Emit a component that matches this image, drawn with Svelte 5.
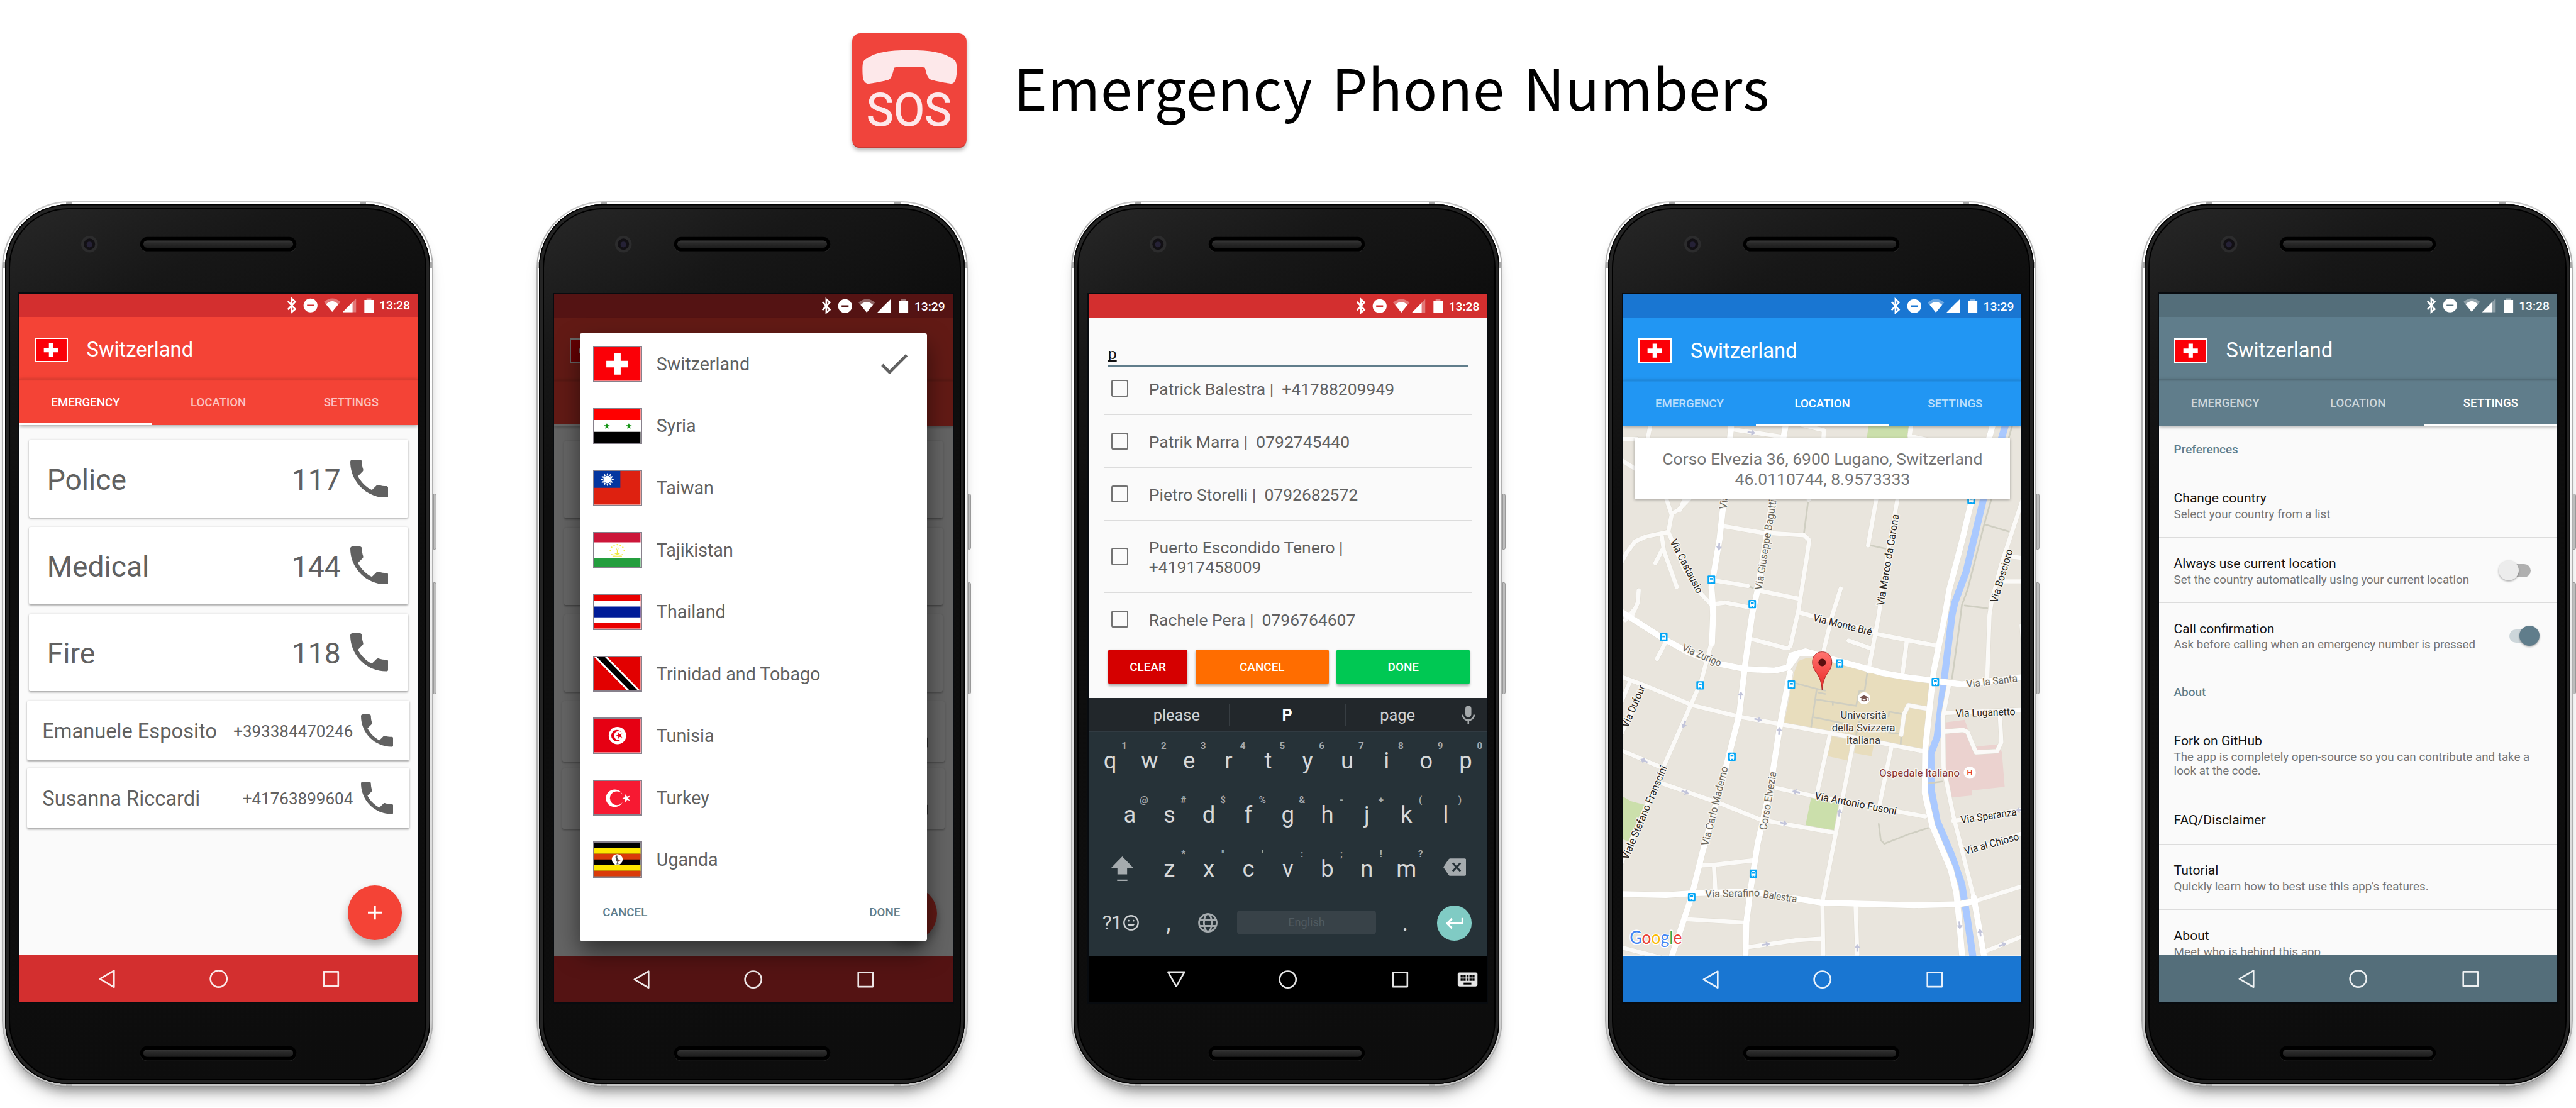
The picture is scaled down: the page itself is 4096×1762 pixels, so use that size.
<script>
  const DARK = '#4a4a48';

  const contacts = [
    { name: 'Police', number: '117', big: true },
    { name: 'Medical', number: '144', big: true },
    { name: 'Fire', number: '118', big: true },
    { name: 'Emanuele Esposito', number: '+393384470246', big: false },
    { name: 'Susanna Riccardi', number: '+41763899604', big: false }
  ];

  const countries = ['Switzerland', 'Syria', 'Taiwan', 'Tajikistan', 'Thailand', 'Trinidad and Tobago', 'Tunisia', 'Turkey', 'Uganda'];

  const people = [
    'Patrick Balestra |\u00a0 +41788209949',
    'Patrik Marra |\u00a0 0792745440',
    'Pietro Storelli |\u00a0 0792682572',
    'Puerto Escondido Tenero |\n+41917458009',
    'Rachele Pera |\u00a0 0796764607'
  ];

  const keyRows = [
    ['q1', 'w2', 'e3', 'r4', 't5', 'y6', 'u7', 'i8', 'o9', 'p0'],
    ['a@', 's#', 'd$', 'f%', 'g&', 'h-', 'j+', 'k(', 'l)'],
    ['z*', 'x"', "c'", 'v:', 'b;', 'n!', 'm?']
  ];

  const settings = [
    { header: 'Preferences' },
    { title: 'Change country', sub: 'Select your country from a list', line: true },
    { title: 'Always use current location', sub: 'Set the country automatically using your current location', line: true, toggle: 'off' },
    { title: 'Call confirmation', sub: 'Ask before calling when an emergency number is pressed', toggle: 'on' },
    { header: 'About' },
    { title: 'Fork on GitHub', sub: 'The app is completely open-source so you can contribute and take a\nlook at the code.', line: true },
    { title: 'FAQ/Disclaimer', line: true },
    { title: 'Tutorial', sub: "Quickly learn how to best use this app's features.", line: true },
    { title: 'About', sub: 'Meet who is behind this app.' }
  ];

  function star(cx, cy, r, rot = -90, n = 5, inner = 0.4) {
    const pts = [];
    for (let i = 0; i < n * 2; i++) {
      const a = ((rot + (i * 180) / n) * Math.PI) / 180;
      const k = i % 2 ? r * inner : r;
      pts.push((cx + k * Math.cos(a)).toFixed(2) + ',' + (cy + k * Math.sin(a)).toFixed(2));
    }
    return pts.join(' ');
  }

  // Map grid units to dp inside the map view
  const mx = (x) => (x - 68) / 3.4366;
  const my = (y) => y / 3.8118 + 195.7;
  const line = (p) => {
    let d = '';
    for (let i = 0; i < p.length; i += 2) d += (i ? 'L' : 'M') + mx(p[i]).toFixed(1) + ' ' + my(p[i + 1]).toFixed(1);
    return d;
  };

  const areas = [
    { c: '#e8ddbd', p: [675, 225, 690, 180, 720, 168, 770, 165, 990, 240, 1165, 268, 1130, 525, 638, 432] },
    { c: '#e8ddbd', p: [803, 475, 890, 495, 866, 572, 793, 555] },
    { c: '#e8ddbd', p: [893, 498, 957, 512, 950, 555, 888, 543] },
    { c: '#ebd2cf', p: [1212, 422, 1280, 412, 1292, 450, 1315, 518, 1400, 508, 1412, 540, 1422, 676, 1306, 690, 1306, 710, 1235, 718, 1210, 650] },
    { c: '#cbdfab', p: [735, 718, 833, 742, 815, 850, 715, 826] },
    { c: '#cbdfab', p: [60, 710, 95, 732, 145, 747, 90, 892, 60, 880] },
    { c: '#cbdfab', p: [940, -750, 1082, -750, 1075, -680, 930, -680] }
  ];
  const paths = [
    [725, -455, 710, -325], [945, -275, 1000, -262],
    [1450, -750, 1350, -360, 1290, -100, 1270, -40, 1260, 50, 1235, 250],
    [1350, -358, 1450, -325], [1280, -38, 1360, -27], [505, -118, 548, -98],
    [975, 822, 982, 885, 995, 900, 1080, 863, 1150, 838],
    [680, 268, 755, 290, 735, 440], [755, 332, 895, 357, 905, 300, 925, 297, 935, 222], [812, 343, 812, 353],
    [745, 402, 870, 430], [1010, 400, 1012, 380, 1060, 390], [755, 290, 785, 297], [762, 305, 785, 310],
    [1055, 470, 1053, 510], [1010, 462, 1045, 466], [895, 470, 905, 420]
  ];
  const minor = [
    [68, 245, 140, 275, 315, 355, 480, 400, 630, 430, 890, 482, 1130, 535],
    [68, 535, 215, 605], [205, 662, 410, 740, 555, 805, 820, 857], [610, 680, 745, 712, 1140, 793],
    [200, -530, 240, -395, 228, -328, 285, -180, 340, -90, 380, -42, 430, -50, 520, -30],
    [228, -328, 150, -310, 110, -290, 80, -245, 60, -205], [205, -310, 212, -255, 258, -112], [205, -255, 182, -205],
    [240, -400, 265, -415, 330, -490], [270, -415, 290, -470],
    [428, -350, 560, -325, 710, -315, 728, -295, 720, -230, 690, -20, 662, 120, 655, 129, 640, 128, 528, 95],
    [400, -135, 510, -115], [545, -98, 690, -65], [123, -98, 120, -50, 100, 0], [75, 20, 105, -20], [726, -480, 726, -455],
    [840, -105, 810, 0, 775, 160], [695, -10, 760, 10, 950, 62, 970, 75, 1180, 120],
    [970, -480, 937, -275], [1045, -480, 1005, -230, 975, 0, 938, 220], [868, 100, 945, 130], [1075, 98, 1060, 225],
    [1210, 385, 1490, 372], [1405, 395, 1410, 500, 1395, 535, 1320, 540, 1290, 460, 1275, 452, 1210, 458],
    [1360, 245, 1368, 0, 1375, -50, 1410, -200, 1490, -470],
    [800, 478, 758, 690], [885, 500, 840, 760, 775, 1130, 778, 1345], [1020, 520, 978, 745],
    [345, 985, 390, 983, 530, 965], [390, 985, 395, 1085], [290, 1197, 495, 1210],
    [510, 1307, 680, 1280, 775, 1273], [893, 1150, 899, 1345], [1350, 1325, 1490, 1262], [60, 1308, 200, 1348],
    [188, 172, 218, 108], [1240, 810, 1490, 765], [1290, 930, 1490, 857],
    [1055, 470, 1065, 390, 1080, 355, 1145, 368], [92, 262, 60, 345], [140, 280, 60, 470],
    [60, -694, 115, -694], [165, -750, 150, -670], [455, -732, 635, -702], [700, -750, 780, -728, 778, -680],
    [1090, -750, 1085, -705, 1170, -685], [60, -612, 120, -570], [1450, -230, 1490, -225], [1420, -133, 1490, -133],
    [383, 100, 345, 260, 210, 600, 60, 980], [1225, 270, 1203, 400, 1205, 600, 1240, 790, 1312, 1110], [1320, 1125, 1490, 1065], [1482, 40, 1488, 120]
  ];
  const major = [
    [452, -750, 422, -420, 410, -300, 381, -110, 385, -60, 387, 0, 383, 110],
    [645, -750, 590, -400, 545, -100, 525, 0, 500, 200, 480, 390, 430, 610, 350, 930, 310, 1110, 238, 1350],
    [660, 225, 625, 430, 590, 680, 545, 900, 520, 1080, 505, 1210, 502, 1350],
    [60, -15, 200, 85, 300, 147, 400, 190, 500, 212, 605, 218, 655, 205, 665, 158, 715, 142, 800, 170, 990, 228, 1080, 245, 1270, 272, 1490, 243],
    [655, 205, 690, 150, 740, 150],
    [1380, -750, 1300, -430, 1270, -290, 1225, -100, 1210, 0, 1170, 220, 1140, 530, 1138, 700, 1165, 830, 1230, 1000, 1250, 1090, 1260, 1200, 1272, 1350],
    [60, 1098, 220, 1102, 310, 1095, 510, 1088, 620, 1105, 775, 1132, 1100, 1142, 1260, 1138, 1320, 1125],
    [1312, 1110, 1350, 1350]
  ];
  const river = [1425, -750, 1345, -450, 1285, -170, 1245, -50, 1235, 0, 1213, 200, 1182, 480, 1160, 545, 1162, 690, 1182, 810, 1232, 940, 1270, 1060, 1290, 1200, 1310, 1350];

  const stops = [[212, 87], [341, 276], [665, 273], [836, 190], [1176, 263], [454, 557], [530, 1018], [311, 1110], [381, -140], [526, -44], [1303, -455]];
  const arrows = [
    [485, 316, -85], [284, 430, 110], [547, 411, 12], [622, 456, -85], [142, 573, 205], [288, 697, 22], [682, 696, 192],
    [638, 819, 12], [835, 778, -82], [1262, 1221, 85], [1335, 1250, -98], [575, 1296, -8], [899, 1310, -90],
    [1415, 1297, -25], [408, -270, 95], [523, -719, 8], [1475, 767, 172]
  ];

  const street = (t, x1, y1, x2, y2, c = '#2a2622') => {
    const ax = mx(x1), ay = my(y1), dx = mx(x2) - ax, dy = my(y2) - ay;
    return { t, c, len: Math.hypot(dx, dy).toFixed(1), tf: `translate(${ax.toFixed(1)} ${ay.toFixed(1)}) rotate(${((Math.atan2(dy, dx) * 180) / Math.PI).toFixed(1)})` };
  };
  const grey = '#6b675c';
  const streets = [
    street('Via Castausio', 233, -290, 330, -83),
    street('Via Giuseppe Bagutti', 560, -98, 612, -453, grey),
    street('Via', 435, -416, 441, -472, grey),
    street('Via Marco da Carona', 993, -36, 1047, -395),
    street('Via Boscioro', 1395, -47, 1452, -255),
    street('Via Monte Bré', 740, 22, 948, 80),
    street('Via Zurigo', 275, 138, 410, 203, grey),
    street('Via la Santa', 1288, 286, 1468, 262, grey),
    street('Via Luganetto', 1248, 401, 1460, 393),
    street('Via Speranza', 1268, 820, 1466, 788),
    street('Via al Chioso', 1283, 943, 1475, 884),
    street('Via Antonio Fusoni', 746, 724, 1036, 786),
    street('Via Serafino', 360, 1112, 553, 1107, grey),
    street('Balestra', 563, 1112, 683, 1132, grey),
    street('Corso Elvezia', 577, 848, 612, 618, grey),
    street('Via Carlo Maderno', 370, 910, 440, 600, grey),
    street('Viale Stefano Franscini', 85, 965, 225, 600),
    street('Via Dufour', 85, 445, 147, 283)
  ];
</script>

{#snippet statusBar(time, full)}
  <div class="status">
    <svg viewBox="0 0 411.4 24">
      <path d="M277.2 7.8l7.6 8.2-3.6 3V5.2l3.6 3.2-7.6 8" fill="none" stroke="#fff" stroke-width="1.7" />
      <circle cx="300.6" cy="12.2" r="7.2" fill="#fff" />
      <path class="dash" d="M297 12.2h7.2" stroke-width="1.7" />
      <path d="M323 18.9L314.4 8.5Q323 1.1 331.6 8.5Z" fill="#fff" opacity=".35" />
      <path d="M323 18.9L316.6 10.9Q323 4.6 329.4 10.9Z" fill="#fff" />
      <path d="M333.8 19.2L347.7 5V19.2Z" fill="#fff" opacity={full ? 1 : 0.35} />
      <path d="M333.8 19.2L344 8.8V19.2Z" fill="#fff" />
      <path d="M358.4 4.8h5v2h-5z" fill="#fff" opacity=".4" />
      <rect x="356.2" y="6.5" width="9.6" height="13" fill="#fff" />
    </svg>
    <span class="time">{time}</span>
  </div>
{/snippet}

{#snippet swiss()}
  <svg class="flag-art" viewBox="0 0 127 93" preserveAspectRatio="none">
    <path d="M0 0h127v93H0z" fill="#fb0007" />
    <path d="M54 17h18.500v20.800H93V56H72.500v20H54V56H33V37.800h21z" fill="#fff" />
  </svg>
{/snippet}

{#snippet appBar(active)}
  <div class="toolbar">
    <span class="mini-flag">{@render swiss()}</span>
    {#if active >= 0}<span class="title">Switzerland</span>{/if}
  </div>
  <div class="tabs">
    {#if active >= 0}
      {#each ['EMERGENCY', 'LOCATION', 'SETTINGS'] as tab, i}
        <span class="tab" class:active={i === active}>{tab}</span>
      {/each}
    {:else}
      <span class="tab active"></span><span class="tab"></span><span class="tab"></span>
    {/if}
  </div>
{/snippet}

{#snippet navBar(keyboard)}
  <div class="nav">
    <svg viewBox="0 0 411.4 48" fill="none" stroke="#fff" stroke-opacity=".9" stroke-width="1.7" stroke-linejoin="round">
      {#if keyboard}
        <path d="M82 16.800h17l-8.500 14.800z" />
      {:else}
        <path d="M97.600 16v17L83 24.500z" />
      {/if}
      <circle cx="205.7" cy="24.400" r="8.500" />
      <rect x="314.200" y="17.100" width="15" height="14.800" />
      {#if keyboard}
        <rect x="381.200" y="17.200" width="20.400" height="14.400" rx="1.800" fill="#e6e6e6" stroke="none" />
        <path d="M384.200 21.200h14.400M384.200 24.700h14.400" stroke="#000" stroke-opacity="1" stroke-width="2.300" stroke-dasharray="2.200 .85" />
        <path d="M387.300 28.700h8" stroke="#000" stroke-opacity="1" stroke-width="2" />
      {/if}
    </svg>
  </div>
{/snippet}

<!-- covered: drawn behind a dialog that hides the labels -->
{#snippet emergency(covered)}
  {@render appBar(covered ? -1 : 0)}
  <div class="cards">
    {#each contacts as c}
      <div class="card" class:big={c.big}>
        <span class="name">{covered ? '' : c.name}</span>
        <span class="number">{covered ? '' : c.number}</span>
        <svg viewBox="3 3 18 18"><path fill="#616161" d="M6.620 10.790c1.440 2.830 3.760 5.140 6.590 6.590l2.200-2.200c.27-.27.67-.36 1.020-.24 1.120.37 2.330.57 3.570.57.55 0 1 .45 1 1V20c0 .55-.45 1-1 1C10.610 21 3 13.390 3 4c0-.55.45-1 1-1h3.500c.55 0 1 .45 1 1 0 1.250.2 2.450.57 3.570.11.35.03.74-.25 1.020z" /></svg>
      </div>
    {/each}
  </div>
  <span class="fab"><svg viewBox="0 0 14 14"><path d="M7 0v14M0 7h14" stroke="#fff" stroke-width="1.900" /></svg></span>
{/snippet}

{#snippet phone(theme, screen, x, y)}
  <section class="phone {theme}" style="--sx: {x}px; --sy: {y}px">
    <i class="side power"></i>
    <i class="side volume"></i>
    <div class="body">
      <svg class="bezel" viewBox="0 0 1176 2432">
        <defs>
          <linearGradient id="grille-{theme}" x1="0" y1="0" x2="0" y2="1">
            <stop offset="0" stop-color="#3a3a3a" /><stop offset=".35" stop-color="#2a2a2a" /><stop offset="1" stop-color="#1c1c1c" />
          </linearGradient>
        </defs>
        <circle cx="233" cy="110" r="23" fill="#2c2c2d" />
        <circle cx="233" cy="110" r="15.500" fill="#121014" />
        <circle cx="233" cy="111" r="8" fill="#252136" />
        <rect x="373" y="92" width="432" height="40" rx="20" fill="#2a2a2a" />
        <rect x="373" y="90" width="432" height="40" rx="20" fill="#000" />
        <rect x="382" y="100" width="414" height="20" rx="10" fill="url(#grille-{theme})" />
        <rect x="373" y="2329" width="432" height="40" rx="20" fill="#222" />
        <rect x="373" y="2327" width="432" height="40" rx="20" fill="#000" />
        <rect x="382" y="2337" width="414" height="20" rx="10" fill="url(#grille-{theme})" />
      </svg>
      <div class="screen">{@render screen()}</div>
    </div>
  </section>
{/snippet}

{#snippet screenEmergency()}
  {@render statusBar('13:28', false)}
  <div class="content">{@render emergency(false)}</div>
  {@render navBar(false)}
{/snippet}

{#snippet flag(name)}
  {#if name === 'Switzerland'}
    {@render swiss()}
  {:else}
    <svg class="flag-art" viewBox="0 0 127 93" preserveAspectRatio="none">
      {#if name === 'Syria'}
        <path d="M0 0h127v93H0z" fill="#fff" /><path d="M0 0h127v29.600H0z" fill="#f00" /><path d="M0 62h127v31H0z" />
        <polygon points={star(34.5, 46.500, 8.500)} fill="#129312" /><polygon points={star(95, 46.500, 8.500)} fill="#129312" />
      {:else if name === 'Taiwan'}
        <path d="M0 0h127v93H0z" fill="#de2110" /><path d="M0 0h71.500v46.600H0z" fill="#0436a0" />
        <polygon points={star(36, 23.500, 18.500, -90, 12, 0.62)} fill="#fff" />
        <circle cx="36" cy="23.500" r="11" fill="#fff" stroke="#0436a0" stroke-width="1.500" />
      {:else if name === 'Tajikistan'}
        <path d="M0 0h127v93H0z" fill="#fff" /><path d="M0 0h127v25H0z" fill="#cc1639" /><path d="M0 68h127v25H0z" fill="#249e3e" />
        <g fill="#f5f03c">
          {#each [-90, -64, -38, -12, -116, -142, -168] as a}
            <circle cx={63 + 19.500 * Math.cos((a * Math.PI) / 180)} cy={51 + 19.500 * Math.sin((a * Math.PI) / 180)} r="2" />
          {/each}
        </g>
        <g fill="none" stroke="#f0e83a" stroke-width="2"><path d="M47 58q8 4 16 0q8 4 16 0M50 63h26M63 45v14M56 55q7 4 14 0" /><circle cx="63" cy="43" r="2.600" /></g>
      {:else if name === 'Thailand'}
        <path d="M0 0h127v93H0z" fill="#ea0000" /><path d="M0 16h127v62H0z" fill="#fff" /><path d="M0 32h127v30H0z" fill="#001b98" />
      {:else if name === 'Trinidad and Tobago'}
        <path d="M0 0h127v93H0z" fill="#e20000" /><path d="M0 0h36l91 93H91z" fill="#fff" /><path d="M7 0h22.500l91 93H98z" />
      {:else if name === 'Tunisia'}
        <path d="M0 0h127v93H0z" fill="#e60013" /><circle cx="63.500" cy="46.500" r="24" fill="#fff" />
        <circle cx="62" cy="46.500" r="15.500" fill="#e60013" /><circle cx="66.500" cy="46.500" r="12.200" fill="#fff" />
        <polygon points={star(69, 46.500, 9.500, 180)} fill="#e60013" />
      {:else if name === 'Turkey'}
        <path d="M0 0h127v93H0z" fill="#f71932" /><circle cx="56" cy="47.500" r="24" fill="#fff" /><circle cx="62" cy="47.500" r="19" fill="#f71932" />
        <polygon points={star(88.500, 47.500, 11.500, 180)} fill="#fff" />
      {:else}
        <path d="M0 0h127v93H0z" /><path d="M0 15.500h127V31H0zM0 62h127v15.500H0z" fill="#fde700" /><path d="M0 31h127v15.500H0zM0 77.500h127V93H0z" fill="#da3b0a" />
        <circle cx="63" cy="46.500" r="15" fill="#fff" />
        <path d="M60 35l4 1-1 5 3 5 4 3-5 5-6-3 1-5-2-6z" fill={DARK} /><path d="M67 48l5 2-5 4z" fill="#da3b0a" /><path d="M63 53v6M59 59h8" stroke={DARK} stroke-width="1.500" />
      {/if}
    </svg>
  {/if}
{/snippet}

{#snippet screenPicker()}
  {@render statusBar('13:29', true)}
  <div class="content">{@render emergency(true)}<div class="dim"></div></div>
  {@render navBar(false)}
  <div class="dialog">
    <ul class="countries">
      {#each countries as c}
        <li>
          <span class="flag">{@render flag(c)}</span>
          <span>{c}</span>
          {#if c === 'Switzerland'}
            <svg class="check" viewBox="3.400 5.500 17.600 13.600"><path fill="#616161" d="M9 16.170L4.830 12l-1.420 1.410L9 19 21 7l-1.410-1.410z" /></svg>
          {/if}
        </li>
      {/each}
    </ul>
    <div class="dialog-actions"><span>CANCEL</span><span>DONE</span></div>
  </div>
{/snippet}

{#snippet keyRow(row)}
  {#each row as k}
    <span class="key">{k[0]}<small>{k[1]}</small></span>
  {/each}
{/snippet}

{#snippet screenContacts()}
  {@render statusBar('13:28', false)}
  <div class="content search">
    <div class="field"><u>p</u></div>
    <ul class="people">
      {#each people as p}
        <li><i class="box"></i><span>{p}</span></li>
      {/each}
    </ul>
    <div class="buttons"><span class="clear">CLEAR</span><span class="cancel">CANCEL</span><span class="done">DONE</span></div>
    <div class="suggest">
      <span class="word">please</span><i></i><span class="word strong">P</span><i></i><span class="word last">page</span>
      <svg viewBox="0 0 14 19"><rect x="3.900" y="0" width="6.200" height="12" rx="3.100" fill="#a4a8aa" /><path d="M1 9.300a6 5.800 0 0 0 12 0M7 15v4" fill="none" stroke="#a4a8aa" stroke-width="1.700" /></svg>
    </div>
    <div class="keyboard">
      <div class="row">{@render keyRow(keyRows[0])}</div>
      <div class="row">{@render keyRow(keyRows[1])}</div>
      <div class="row">
        <span class="wide"><svg class="shift" viewBox="0 0 24 26"><path d="M12 0l11.800 12.200H17v6.300H7v-6.300H.2zM6.700 23.800h10.600v1.500H6.700z" fill="#a5abae" /></svg></span>
        {@render keyRow(keyRows[2])}
        <span class="wide"><svg class="del" viewBox="0 0 24 18"><path d="M7 0h15a2 2 0 0 1 2 2v14a2 2 0 0 1-2 2H7Q6 18 5.400 17L0 9l5.400-8Q6 0 7 0z" fill="#a5abae" /><path d="M9.800 4.800l8 8.400m0-8.400l-8 8.400" stroke="#263238" stroke-width="1.900" /></svg></span>
      </div>
      <div class="row">
        <span class="wide symbols">?1<svg viewBox="0 0 16 16" fill="none" stroke="#cfd2d4" stroke-width="1.500"><circle cx="8" cy="8" r="7.200" /><path d="M4.300 9.300a3.900 3.400 0 0 0 7.400 0z" fill="#cfd2d4" stroke="none" /><circle cx="5.500" cy="5.900" r=".9" fill="#cfd2d4" stroke="none" /><circle cx="10.500" cy="5.900" r=".9" fill="#cfd2d4" stroke="none" /></svg></span>
        <span class="key">,</span>
        <span class="key"><svg class="globe" viewBox="0 0 20 20" fill="none" stroke="#a5abae" stroke-width="1.800"><circle cx="10" cy="10" r="9" /><ellipse cx="10" cy="10" rx="4" ry="9" /><path d="M1.500 6.800h17M1.500 13.200h17" /></svg></span>
        <span class="space">English</span>
        <span class="key dot">.</span>
        <span class="enter"><svg viewBox="0 0 19 12"><path d="M17.800 .5v5.700H2M7 1.200L2 6.200l5 5" fill="none" stroke="#fff" stroke-width="2" /></svg></span>
      </div>
    </div>
  </div>
  {@render navBar(true)}
{/snippet}

{#snippet screenMap()}
  {@render statusBar('13:29', true)}
  <div class="content map-page">
    {@render appBar(1)}
    <div class="map">
      <svg viewBox="0 0 411.4 547.200">
        <defs>
          <linearGradient id="pin" x1="0" y1="0" x2="0" y2="1"><stop offset="0" stop-color="#ff7470" /><stop offset=".6" stop-color="#f24441" /><stop offset="1" stop-color="#e02c2b" /></linearGradient>
        </defs>
        <path d="M0 0h411.400v547.200H0z" fill="#e9e5dd" />
        {#each areas as a}<path d={line(a.p) + 'Z'} fill={a.c} />{/each}
        <g fill="none" stroke-linejoin="round" stroke-linecap="round">
          {#each paths as p}<path d={line(p)} stroke="#cfcec1" stroke-width="1.700" />{/each}
          <path d={line(river)} stroke="#aac9ff" stroke-width="7.200" />
          <path d={line([1150, 662, 1200, 655])} stroke="#cfcec1" stroke-width="1.700" />
          {#each minor as p}<path d={line(p)} stroke="#e0dcd2" stroke-width="5" />{/each}
          {#each major as p}<path d={line(p)} stroke="#e0dcd2" stroke-width="6.700" />{/each}
          {#each minor as p}<path d={line(p)} stroke="#fbfaf8" stroke-width="4.300" />{/each}
          {#each major as p}<path d={line(p)} stroke="#fff" stroke-width="6.100" />{/each}
        </g>
        {#each arrows as [x, y, r]}
          <path transform="translate({mx(x)} {my(y)}) rotate({r})" d="M-4 -.9H0V-3L4.200 0 0 3V.9H-4z" fill="#c2c4da" />
        {/each}
        {#each stops as [x, y]}
          <g transform="translate({mx(x) - 3.900} {my(y) - 4.300})">
            <rect width="7.800" height="8.600" rx=".8" fill="#03a6f6" />
            <path d="M1.700 2.600q0-1.200 1.200-1.200h2q1.200 0 1.200 1.200v3.900H1.700z" fill="#fff" /><path d="M2.400 2.600h3v1.700h-3z" fill="#03a6f6" /><path d="M2 6.300h1v1H2zM4.800 6.300h1v1h-1z" fill="#fff" />
          </g>
        {/each}
        <g class="labels">
          {#each streets as s}
            <text transform={s.tf} textLength={s.len} lengthAdjust="spacingAndGlyphs" fill={s.c}>{s.t}</text>
          {/each}
          <g text-anchor="middle" fill="#3c3a36">
            <text x={mx(921)} y={my(407)}>Università</text>
            <text x={mx(921)} y={my(457)}>della Svizzera</text>
            <text x={mx(921)} y={my(506)}>italiana</text>
          </g>
          <text x={mx(977)} y={my(636)} textLength="83" fill="#8b3432">Ospedale Italiano</text>
          <text class="google" x={mx(91)} y={my(1295)} textLength="54" lengthAdjust="spacingAndGlyphs"><tspan fill="#4285f4">G</tspan><tspan fill="#ea4335">o</tspan><tspan fill="#fbbc05">o</tspan><tspan fill="#4285f4">g</tspan><tspan fill="#34a853">l</tspan><tspan fill="#ea4335">e</tspan></text>
        </g>
        <circle cx={mx(923)} cy={my(327)} r="6.300" fill="#fff" />
        <path transform="translate({mx(923)} {my(327)})" d="M-4.800 -.9L0 -3 4.800 -.9 0 1.200zM-2.800 .7v1.600Q0 4 2.800 2.300V.7L0 2zM4.100 -.6h.7v3h-.7z" fill="#795550" />
        <circle cx={mx(1298)} cy={my(620)} r="6.300" fill="#fff" />
        <text class="hospital" x={mx(1298)} y={my(620) + 2.900} text-anchor="middle">H</text>
        <path transform="translate({mx(774)} {my(295)})" d="M0 0C-.9 -10.500 -3.500 -14.500 -7.200 -19.800C-12.500 -27.500 -10.500 -39.500 0 -39.500S12.500 -27.500 7.200 -19.800C3.500 -14.500 .9 -10.500 0 0Z" fill="url(#pin)" stroke="#a82323" stroke-width=".6" />
        <circle cx={mx(774)} cy={my(186)} r="3.900" fill="#5a0f0f" />
      </svg>
      <div class="address"><span>Corso Elvezia 36, 6900 Lugano, Switzerland</span><span>46.0110744, 8.9573333</span></div>
    </div>
  </div>
  {@render navBar(false)}
{/snippet}

{#snippet screenSettings()}
  {@render statusBar('13:28', false)}
  <div class="content">
    {@render appBar(2)}
    <div class="settings">
      {#each settings as s}
        {#if s.header}
          <h2>{s.header}</h2>
        {:else}
          <div class="pref" class:line={s.line}>
            <div><b>{s.title}</b>{#if s.sub}<p>{s.sub}</p>{/if}</div>
            {#if s.toggle}<i class="switch {s.toggle}"></i>{/if}
          </div>
        {/if}
      {/each}
    </div>
  </div>
  {@render navBar(false)}
{/snippet}

<main>
  <header>
    <svg class="logo" viewBox="0 0 316 316">
      <rect width="316" height="316" rx="22" fill="#f0443c" />
      <path d="M1 300Q4 316 22 316H294Q312 316 315 300Q310 313 294 313H22Q6 313 1 300Z" fill="#c93a34" />
      <path d="M28.500 100C28.500 85 30 78 34 74C60 53 100 46.500 158 46.500C216 46.500 256 53 283 74C287 78 289 85 289 100C289 110 288 119 286 127C283 135 279 139 275 139C270 139 235 133 218 128C209 125 206 115 201 95C190 91 127 91 116 95C112 112 108 125 101 128C85 133 50 139 44 139C37 139 32 132 30 125C29 118 28.500 110 28.500 100Z" fill="#fde8ea" />
      <text x="40" y="254.500" textLength="234" lengthAdjust="spacingAndGlyphs">SOS</text>
    </svg>
    <h1>Emergency Phone Numbers</h1>
  </header>
  <div class="phones">
    {@render phone('red', screenEmergency, 22.9, 141.600)}
    {@render phone('dimmed', screenPicker, 23.9, 142.800)}
    {@render phone('contacts', screenContacts, 23.9, 142.800)}
    {@render phone('blue', screenMap, 24, 142.800)}
    {@render phone('slate', screenSettings, 22.800, 142.200)}
  </div>
</main>

<style>
  /* 1rem equals 10dp of the device screens */
  :global(html) { font-size: 15.376px; }
  :global(body) { margin: 0; background: #fff; overflow: hidden; }
  main { zoom: 1.0013; width: 4090px; height: 1759px; font-family: Roboto, sans-serif; background: #fff; }
  svg { display: block; }
  ul { list-style: none; margin: 0; padding: 0; }

  header { display: flex; align-items: flex-start; height: 319.700px; padding: 52.900px 0 0 1353.700px; box-sizing: border-box; }
  .logo { width: 181.700px; height: 181.700px; overflow: visible; filter: drop-shadow(0 4px 3px rgba(0, 0, 0, 0.28)); }
  .logo text { font-family: Roboto, sans-serif; font-size: 124px; fill: #fde8ea; stroke: #fde8ea; stroke-width: 2px; }
  h1 { margin: -6.600px 0 0 74.500px; font: 400 90px/182px "Noto Sans CJK JP", sans-serif; letter-spacing: 0.800px; word-spacing: 9px; color: #000; white-space: nowrap; }

  .phones { display: flex; gap: 163.700px; padding-left: 3.100px; }
  .phone {
    position: relative; flex: none; width: 685px; height: 1407px; box-sizing: border-box; padding: 3px 2.500px; border: 2px solid;
    border-color: #c6c6c6 #b0b0b0 #979797; border-radius: 106px;
    background:
      linear-gradient(90deg, transparent 100px, #a8a8a8 100px 110px, transparent 110px 566px, #a8a8a8 566px 576px, transparent 576px),
      linear-gradient(180deg, transparent 94px, #a8a8a8 94px 104px, transparent 104px),
      linear-gradient(180deg, #fff 0, #fff 20%, #d2d2d2 90%, #c4c4c4 100%);
    box-shadow: 0 14px 18px -10px rgba(0, 0, 0, 0.4), 0 22px 34px -14px rgba(0, 0, 0, 0.16);
  }
  .phone:last-child { margin-left: 3px; }
  .side { position: absolute; right: -7px; width: 5px; box-sizing: border-box; background: #bdbdbd; border: 1px solid #999; border-radius: 0 3px 3px 0; }
  .power { top: 462px; height: 89px; }
  .volume { top: 603px; height: 178px; }
  .body {
    position: relative; height: 100%; border-radius: 100px; overflow: hidden;
    background: linear-gradient(152deg, #282828 0, #171717 14%, #0e0e0e 28%, #0d0d0d 100%);
    box-shadow: inset 0 0 0 1.500px #000, inset 0 0 0 6px #242424, inset 0 0 0 8px #000;
    padding: var(--sy) 0 0 var(--sx); box-sizing: border-box;
  }
  .bezel { position: absolute; inset: 0; width: 100%; height: 100%; }
  .screen {
    position: relative; display: flex; flex-direction: column; width: 41.140rem; height: 73.140rem; overflow: hidden;
    background: #fafafa; outline: 2px solid #080b0f;
  }

  .red, .contacts { --bar: #d32f2f; --tool: #f44336; }
  .dimmed { --bar: #541313; --tool: #f44336; }
  .blue { --bar: #1976d2; --tool: #2196f3; }
  .slate { --bar: #546e7a; --tool: #607d8b; }

  .status { position: relative; flex: none; display: flex; justify-content: flex-end; height: 2.400rem; background: var(--bar); }
  .status svg { position: absolute; inset: 0; width: 41.140rem; height: 2.400rem; }
  .dash { stroke: var(--bar); }
  .time { padding: 0.030rem 0.780rem 0 0; color: #fff; font-weight: 500; font-size: 1.250rem; line-height: 2.450rem; }
  .content { position: relative; z-index: 0; flex: none; display: flex; flex-direction: column; height: 65.920rem; overflow: hidden; }
  .nav { flex: none; height: 4.820rem; background: var(--bar); }
  .nav svg { width: 41.140rem; height: 4.800rem; }
  .contacts .nav { background: #000; }

  .toolbar { flex: none; display: flex; align-items: center; height: 6.400rem; padding: 0.480rem 0 0 1.580rem; box-sizing: border-box; background: var(--tool); }
  .mini-flag { width: 3.430rem; height: 2.550rem; box-sizing: border-box; border: 0.170rem solid #fff; }
  .flag-art { width: 100%; height: 100%; }
  .title { margin-left: 1.940rem; color: #fff; font-size: 2.130rem; line-height: 1; }
  .tabs { position: relative; z-index: 1; flex: none; display: flex; height: 4.800rem; background: linear-gradient(rgba(0, 0, 0, 0.16), rgba(0, 0, 0, 0) 0.250rem) var(--tool); box-shadow: 0 0.100rem 0.400rem rgba(0, 0, 0, 0.4); }
  .tab { flex: 1; text-align: center; color: rgba(255, 255, 255, 0.7); font-weight: 500; font-size: 1.210rem; line-height: 4.950rem; box-sizing: border-box; }
  .tab.active { color: #fff; box-shadow: inset 0 -0.200rem #fff; }

  .cards { display: flex; flex-direction: column; gap: 0.760rem; padding: 1.500rem 0.810rem 0; }
  .card { display: flex; align-items: center; height: 6.200rem; box-sizing: border-box; padding: 0 1.690rem 0 1.580rem; background: #fff; border-radius: 0.200rem; box-shadow: 0 0.100rem 0.200rem rgba(0, 0, 0, 0.33); color: #616161; }
  .card.big { height: 8rem; margin: 0 0.180rem 0.220rem; padding: 0 2.040rem 0 1.880rem; }
  .name { font-size: 2.120rem; padding-top: 0.200rem; flex: 1; white-space: nowrap; }
  .number { font-size: 1.690rem; padding-top: 0.200rem; }
  .card.big .name, .card.big .number { font-size: 3rem; padding-top: 0.240rem; }
  .card svg { width: 3.350rem; height: 3.350rem; margin-left: 0.820rem; }
  .card.big svg { width: 3.930rem; height: 3.930rem; margin-left: 0.980rem; }
  .fab { position: absolute; left: 33.950rem; top: 58.750rem; width: 5.600rem; height: 5.600rem; display: grid; place-items: center; border-radius: 50%; background: #f44336; box-shadow: 0 0.500rem 0.900rem rgba(0, 0, 0, 0.3); }
  .fab svg { width: 1.450rem; height: 1.450rem; }
  .dim { position: absolute; inset: 0; z-index: 2; background: rgba(0, 0, 0, 0.6); }

  .dialog { position: absolute; z-index: 3; left: 2.630rem; top: 4rem; width: 35.900rem; height: 62.750rem; display: flex; flex-direction: column; background: #fff; border-radius: 0.200rem; box-shadow: 0 1.200rem 2.400rem rgba(0, 0, 0, 0.5); overflow: hidden; }
  .countries { flex: none; height: 57.070rem; overflow: hidden; border-bottom: 0.100rem solid #dcdcdc; box-sizing: border-box; }
  .countries li { display: flex; align-items: center; height: 6.400rem; padding: 0 2rem 0 1.400rem; color: #616161; font-size: 1.860rem; }
  .flag { width: 5.030rem; height: 3.740rem; box-sizing: border-box; border: 0.140rem solid #87818c; margin-right: 1.500rem; }
  .check { width: 2.750rem; height: 2.120rem; margin-left: auto; }
  .dialog-actions { display: flex; justify-content: space-between; padding: 0 2.800rem 0 2.370rem; color: #607d8b; font-weight: 500; font-size: 1.220rem; line-height: 5.700rem; }

  .field { flex: none; margin: 2.600rem 2rem 0; height: 2.270rem; border-bottom: 0.220rem solid #607d8b; color: #111; font-size: 1.600rem; line-height: 2.280rem; }
  .field u { text-decoration-thickness: 0.100rem; text-underline-offset: 0.160rem; text-decoration-skip-ink: none; }
  .people { margin: -0.450rem 1.600rem 0; }
  .people li { display: flex; align-items: center; height: 5.450rem; box-sizing: border-box; border-bottom: 0.100rem solid #dcdcdc; color: #616161; font-size: 1.720rem; line-height: 2.030rem; white-space: pre; }
  .people li:nth-child(4) { height: 7.490rem; }
  .people li:last-child { border: 0; height: 5.400rem; }
  .box { width: 1.780rem; height: 1.780rem; box-sizing: border-box; border: 0.170rem solid #727272; border-radius: 0.200rem; margin: 0 2.110rem 0 0.730rem; }
  .people span { padding-top: 0.140rem; }
  .buttons { display: grid; grid-template-columns: 8.210rem 13.760rem 13.770rem; gap: 0.820rem; padding: 0.430rem 0 1.410rem 2rem; }
  .buttons span { height: 3.600rem; border-radius: 0.200rem; color: #fff; font-weight: 500; font-size: 1.230rem; line-height: 3.680rem; text-align: center; box-shadow: 0 0.150rem 0.250rem rgba(0, 0, 0, 0.3); }
  .clear { background: #d50000; }
  .cancel { background: #ff6d00; }
  .done { background: #00c853; }

  .suggest { flex: none; position: relative; display: flex; align-items: center; height: 3.530rem; box-sizing: border-box; background: #22272b; border-bottom: 0.130rem solid #313b42; color: #d0d2d4; font-size: 1.650rem; padding: 0.200rem 0 0 3.700rem; }
  .word { width: 10.750rem; text-align: center; margin-top: -0.050rem; }
  .word.strong { width: 11.900rem; font-weight: 700; color: #fff; }
  .word.last { width: 10.700rem; }
  .suggest i { width: 0.100rem; height: 2.200rem; margin-top: -0.050rem; background: #373d42; }
  .suggest svg { width: 1.400rem; height: 1.920rem; margin-left: 1.280rem; margin-top: -0.100rem; }
  .keyboard { flex: 1; display: flex; flex-direction: column; padding-top: 0.330rem; background: #263238; color: #d6d8d9; }
  .row { display: flex; justify-content: center; height: 5.570rem; }
  .key { position: relative; width: 4.080rem; text-align: center; font-size: 2.370rem; line-height: 5.300rem; }
  .key small { position: absolute; left: 2.600rem; top: 0; width: 1.800rem; font-size: 0.980rem; font-weight: 700; line-height: 2.250rem; color: #a4a9ac; }
  .wide { width: 6.080rem; display: flex; align-items: center; justify-content: center; }
  .shift { width: 2.400rem; height: 2.600rem; margin: 0 0 0.200rem 0.400rem; }
  .del { width: 2.380rem; height: 1.820rem; margin: 0 0.200rem 0.600rem 0; }
  .symbols { width: 6.080rem; font-size: 2.060rem; line-height: 5.300rem; letter-spacing: -0.060rem; align-items: flex-start; justify-content: flex-start; padding-left: 1.300rem; box-sizing: border-box; color: #cfd2d4; }
  .symbols svg { width: 1.620rem; height: 1.620rem; margin: 1.830rem 0 0 0.150rem; flex: none; }
  .globe { width: 2.020rem; height: 2.020rem; margin: 1.630rem auto 0; }
  .space { width: 14.400rem; height: 2.430rem; margin: 1.400rem 0 0 0.950rem; background: #384248; border-radius: 0.300rem; color: #505b61; font-size: 1.180rem; line-height: 2.500rem; text-align: center; }
  .key.dot { margin-left: 0.950rem; }
  .enter { width: 3.620rem; height: 3.620rem; margin: 0.870rem 1.450rem 0 1.230rem; border-radius: 50%; background: #80cbc4; display: grid; place-items: center; }
  .enter svg { width: 1.900rem; height: 1.200rem; margin-top: 0.100rem; }

  .map { position: relative; flex: 1; }
  .map > svg { width: 41.140rem; height: 54.720rem; }
  .labels text { font-size: 10.800px; paint-order: stroke; stroke: #f6f4ef; stroke-width: 2px; stroke-linejoin: round; }
  .labels .google { font-family: Lato, sans-serif; font-weight: 400; font-size: 19px; stroke: #fff; }
  .hospital { font-size: 8.300px; font-weight: 500; fill: #e53935; }
  .address { position: absolute; left: 1.190rem; top: 1.210rem; width: 38.790rem; height: 6.320rem; box-sizing: border-box; padding-top: 1.160rem; display: flex; flex-direction: column; align-items: center; background: #fff; box-shadow: 0 0.100rem 0.300rem rgba(0, 0, 0, 0.3); color: #757575; font-size: 1.720rem; line-height: 2.080rem; white-space: nowrap; }

  .settings { display: flex; flex-direction: column; }
  .settings > * { flex: none; }
  h2 { margin: 0; height: 4.840rem; padding-left: 1.560rem; color: #607d8b; font-size: 1.230rem; font-weight: 500; line-height: 5rem; }
  .pref { display: flex; align-items: center; justify-content: space-between; box-sizing: border-box; min-height: 5.200rem; padding: 1.730rem 1.500rem 1.710rem 1.560rem; }
  .pref.line { border-bottom: 0.100rem solid #dcdcdc; padding-bottom: 1.610rem; }
  .pref b { display: block; color: #141414; font-size: 1.370rem; font-weight: 400; line-height: 1.800rem; }
  .pref p { margin: 0.140rem 0 0; color: #757575; font-size: 1.220rem; line-height: 1.400rem; white-space: pre; }
  .switch { position: relative; width: 2.700rem; height: 1.360rem; border-radius: 1rem; background: #b0b0b0; margin-right: 1.200rem; }
  .switch::before { content: ""; position: absolute; top: -0.380rem; left: -0.650rem; width: 2.080rem; height: 2.080rem; border-radius: 50%; background: #ececec; box-shadow: 0 0.100rem 0.200rem rgba(0, 0, 0, 0.35); }
  .switch.on { background: #cdd6da; margin-right: 0.750rem; }
  .switch.on::before { left: 1.050rem; background: #607d8b; }
</style>
